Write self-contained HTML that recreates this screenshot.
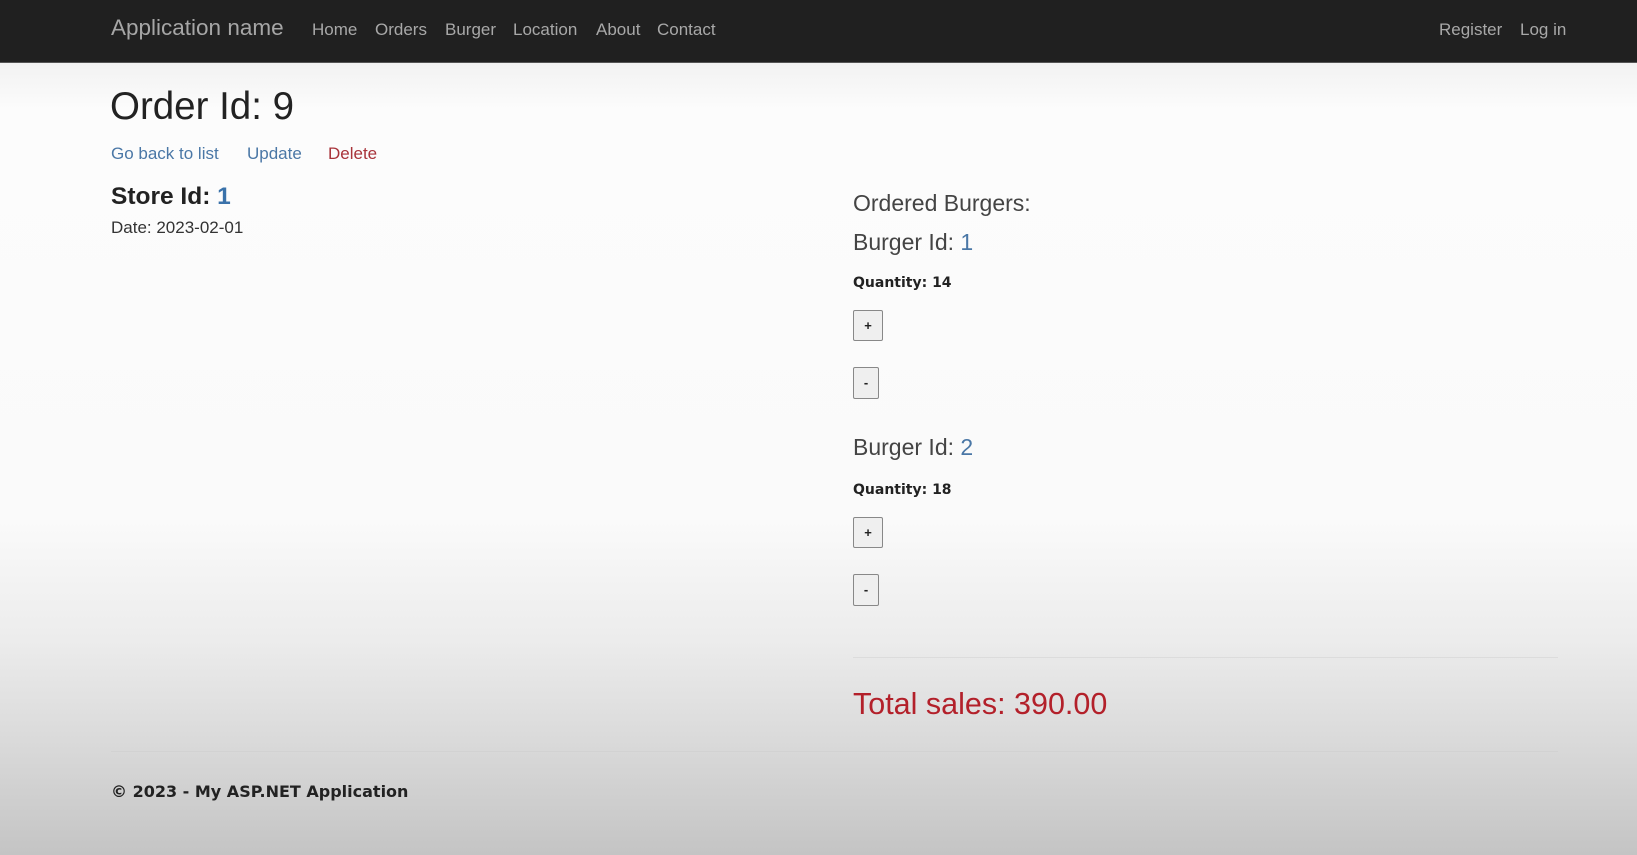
<!DOCTYPE html>
<html><head><meta charset="utf-8"><style>
*{margin:0;padding:0;box-sizing:border-box}
body{width:1637px;height:855px;overflow:hidden;font-family:"Liberation Sans",sans-serif;color:#333;
background:linear-gradient(to bottom,#f2f2f2 63px,#fcfcfc 110px,#fafafa 520px,#ececec 640px,#dadada 740px,#c4c4c4 855px);position:relative}
.nav{position:absolute;left:0;top:0;width:1637px;height:63px;background:#202020;border-bottom:1px solid #555}
.a{position:absolute;white-space:nowrap;line-height:1}
.nl{color:#a8a8a8;font-size:17px;top:21px}
.btn{position:absolute;left:853px;background:#efefef;border:1px solid #888;border-radius:2px;font-size:13px;font-weight:bold;text-align:center;color:#222}
.hr{position:absolute;height:1px;background:#e2e2e2}
.q{font-family:"DejaVu Sans",sans-serif;font-size:14px;font-weight:bold;color:#222}
</style></head><body>
<div class="nav"></div>
<div class="a" style="left:111px;top:17px;font-size:22.5px;color:#a6a6a6">Application name</div>
<div class="a nl" style="left:312px">Home</div>
<div class="a nl" style="left:375px">Orders</div>
<div class="a nl" style="left:445px">Burger</div>
<div class="a nl" style="left:513px">Location</div>
<div class="a nl" style="left:596px">About</div>
<div class="a nl" style="left:657px">Contact</div>
<div class="a nl" style="left:1439px">Register</div>
<div class="a nl" style="left:1520px">Log in</div>

<div class="a" style="left:110px;top:88px;font-size:38.5px;color:#222">Order Id: 9</div>
<div class="a" style="left:111px;top:145px;font-size:17px;color:#4a77a6">Go back to list</div>
<div class="a" style="left:247px;top:145px;font-size:17px;color:#4a77a6">Update</div>
<div class="a" style="left:328px;top:145px;font-size:17px;color:#a8333a">Delete</div>
<div class="a" style="left:111px;top:185px;font-size:24.5px;font-weight:bold;color:#222">Store Id: <span style="color:#3a72aa">1</span></div>
<div class="a" style="left:111px;top:219px;font-size:17px;color:#333">Date: 2023-02-01</div>

<div class="a" style="left:853px;top:192px;font-size:23px;color:#444">Ordered Burgers:</div>
<div class="a" style="left:853px;top:231px;font-size:23px;color:#444">Burger Id: <span style="color:#4a77a6">1</span></div>
<div class="a q" style="left:853px;top:276px">Quantity: 14</div>
<div class="btn" style="top:310px;width:30px;height:31px;line-height:29px">+</div>
<div class="btn" style="top:367px;width:26px;height:32px;line-height:30px">-</div>
<div class="a" style="left:853px;top:436px;font-size:23px;color:#444">Burger Id: <span style="color:#4a77a6">2</span></div>
<div class="a q" style="left:853px;top:483px">Quantity: 18</div>
<div class="btn" style="top:517px;width:30px;height:31px;line-height:29px">+</div>
<div class="btn" style="top:574px;width:26px;height:32px;line-height:30px">-</div>

<div class="hr" style="left:853px;top:657px;width:705px;background:#dcdcdc"></div>
<div class="a" style="left:853px;top:689px;font-size:30.5px;color:#b3202a">Total sales: 390.00</div>
<div class="hr" style="left:111px;top:751px;width:1447px;background:#d2d2d2"></div>
<div class="a" style="left:111px;top:784px;font-family:'DejaVu Sans',sans-serif;font-size:16px;font-weight:bold;color:#222">© 2023 - My ASP.NET Application</div>
</body></html>
